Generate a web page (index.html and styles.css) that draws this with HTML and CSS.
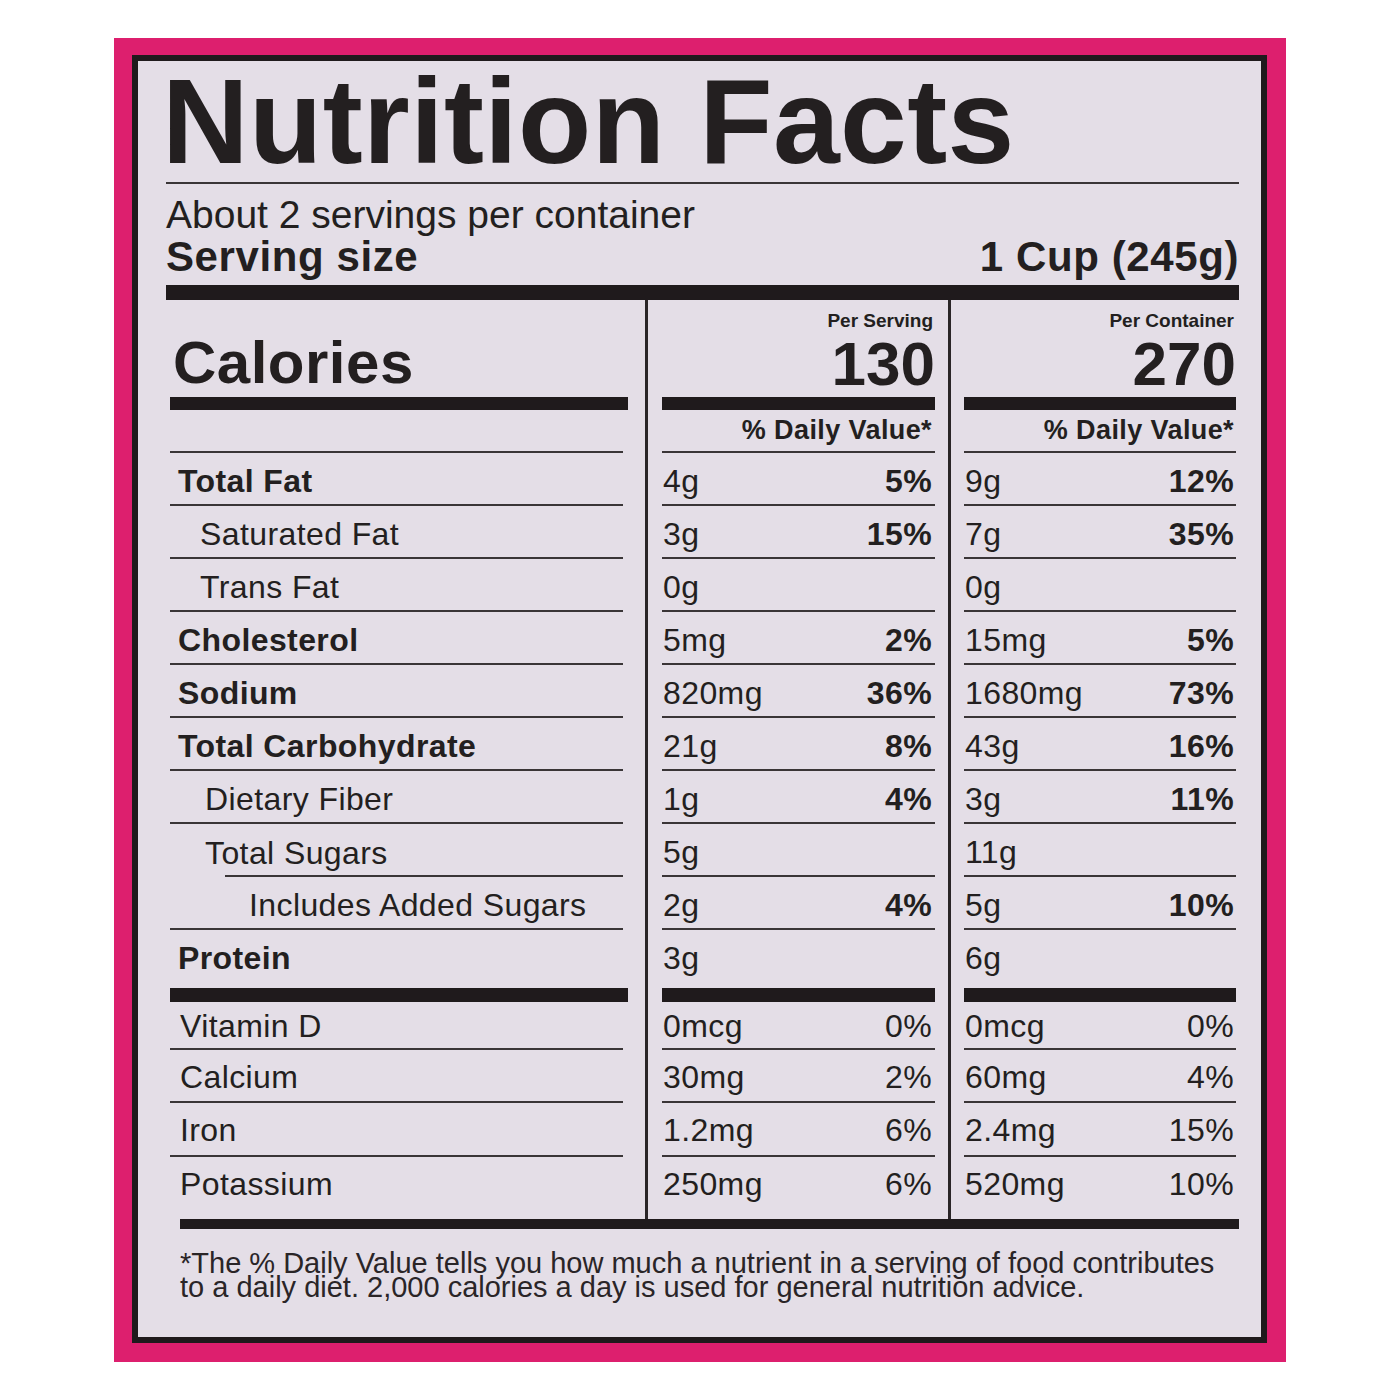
FILE: index.html
```html
<!DOCTYPE html>
<html lang="en">
<head>
<meta charset="UTF-8">
<meta name="viewport" content="width=device-width, initial-scale=1.0">
<title>Nutrition Facts</title>
<link rel="stylesheet" href="styles.css">
</head>
<body>
<div class="frame">
    <div class="label">
        <h1 class="title">Nutrition Facts</h1>
        <p class="servings">About 2 servings per container</p>
        <div class="serving-size">
            <span>Serving size</span>
            <span>1 Cup (245g)</span>
        </div>

        <div class="facts">
            <!-- nombres -->
            <div class="col col-names">
                <div class="head"><span class="calories">Calories</span></div>
                <div class="bar"></div>
                <div class="row dv"></div>
                <div class="row bold">Total Fat</div>
                <div class="row lvl1">Saturated Fat</div>
                <div class="row lvl1">Trans Fat</div>
                <div class="row bold">Cholesterol</div>
                <div class="row bold">Sodium</div>
                <div class="row bold">Total Carbohydrate</div>
                <div class="row lvl2">Dietary Fiber</div>
                <div class="row lvl2 sugars">Total Sugars</div>
                <div class="row lvl3">Includes Added Sugars</div>
                <div class="row bold protein">Protein</div>
                <div class="bar bar-low"></div>
                <div class="row vit vit-d">Vitamin D</div>
                <div class="row vit">Calcium</div>
                <div class="row vit iron">Iron</div>
                <div class="row vit last">Potassium</div>
            </div>

            <!-- por porción -->
            <div class="col col-values">
                <div class="head">
                    <span class="per">Per Serving</span>
                    <span class="cal-num">130</span>
                </div>
                <div class="bar"></div>
                <div class="row dv">% Daily Value*</div>
                <div class="row"><span>4g</span><b>5%</b></div>
                <div class="row"><span>3g</span><b>15%</b></div>
                <div class="row"><span>0g</span></div>
                <div class="row"><span>5mg</span><b>2%</b></div>
                <div class="row"><span>820mg</span><b>36%</b></div>
                <div class="row"><span>21g</span><b>8%</b></div>
                <div class="row"><span>1g</span><b>4%</b></div>
                <div class="row"><span>5g</span></div>
                <div class="row"><span>2g</span><b>4%</b></div>
                <div class="row protein"><span>3g</span></div>
                <div class="bar bar-low"></div>
                <div class="row vit vit-d"><span>0mcg</span><span>0%</span></div>
                <div class="row vit"><span>30mg</span><span>2%</span></div>
                <div class="row vit iron"><span>1.2mg</span><span>6%</span></div>
                <div class="row vit last"><span>250mg</span><span>6%</span></div>
            </div>

            <!-- por envase -->
            <div class="col col-values col-last">
                <div class="head">
                    <span class="per">Per Container</span>
                    <span class="cal-num">270</span>
                </div>
                <div class="bar"></div>
                <div class="row dv">% Daily Value*</div>
                <div class="row"><span>9g</span><b>12%</b></div>
                <div class="row"><span>7g</span><b>35%</b></div>
                <div class="row"><span>0g</span></div>
                <div class="row"><span>15mg</span><b>5%</b></div>
                <div class="row"><span>1680mg</span><b>73%</b></div>
                <div class="row"><span>43g</span><b>16%</b></div>
                <div class="row"><span>3g</span><b>11%</b></div>
                <div class="row"><span>11g</span></div>
                <div class="row"><span>5g</span><b>10%</b></div>
                <div class="row protein"><span>6g</span></div>
                <div class="bar bar-low"></div>
                <div class="row vit vit-d"><span>0mcg</span><span>0%</span></div>
                <div class="row vit"><span>60mg</span><span>4%</span></div>
                <div class="row vit iron"><span>2.4mg</span><span>15%</span></div>
                <div class="row vit last"><span>520mg</span><span>10%</span></div>
            </div>
        </div>

        <div class="bottom-bar"></div>
        <p class="footnote">*The % Daily Value tells you how much a nutrient in a serving of food contributes<br>to a daily diet. 2,000 calories a day is used for general nutrition advice.</p>
    </div>
</div>
</body>
</html>
```

FILE: styles.css
```css
body {
    margin: 0;
    background-color: #fff;
    font-family: "Liberation Sans", Arial, sans-serif;
    color: #231f20;
}
.frame {
    box-sizing: border-box;
    width: 1172px;
    height: 1324px;
    margin: 38px 0 0 114px;
    padding: 17px 19px 19px 18px;
    background-color: #dd1f6e;
}
.label {
    box-sizing: border-box;
    height: 100%;
    border: 6px solid #1f1a1c;
    background-color: #e4dee7;
    padding: 0 22px 0 28px;
}
.title {
    margin: 0;
    text-indent: -4px;
    font-size: 120px;
    line-height: 121px;
    font-weight: bold;
    letter-spacing: 0.4px;
    border-bottom: 2px solid #3a3537;
}
.servings {
    margin: 11px 0 0;
    font-size: 39px;
    line-height: 40px;
}
.serving-size {
    display: flex;
    justify-content: space-between;
    font-size: 42px;
    line-height: 44px;
    font-weight: bold;
    letter-spacing: 0.6px;
    padding-bottom: 6px;
    border-bottom: 15px solid #1f1a1c;
}

/* tabla de tres columnas */
.facts {
    display: grid;
    grid-template-columns: 479px 303px 290px;
}
.col {
    display: flex;
    flex-direction: column;
    padding-bottom: 10px;
}
.col-names {
    padding-left: 4px;
    padding-right: 22px;
}
.col-values {
    border-left: 3px solid #2a2527;
    padding-left: 14px;
    padding-right: 13px;
}
.col-last {
    padding-left: 13px;
    padding-right: 2px;
}
.head {
    height: 97px;
    box-sizing: border-box;
    display: flex;
    flex-direction: column;
    justify-content: flex-end;
    align-items: flex-end;
    padding-bottom: 2px;
}
.col-names .head {
    align-items: flex-start;
    padding-bottom: 4px;
}
.calories {
    font-size: 60px;
    line-height: 60px;
    font-weight: bold;
    letter-spacing: 0.5px;
    padding-left: 3px;
}
.per {
    font-size: 19px;
    line-height: 20px;
    font-weight: bold;
    margin-bottom: 2px;
    padding-right: 2px;
}
.cal-num {
    font-size: 62px;
    line-height: 62px;
    font-weight: bold;
}
.bar {
    height: 13px;
    background-color: #1f1a1c;
}
.col-names .bar {
    margin-right: -5px;
}
.bar-low {
    height: 14px;
}
.row {
    box-sizing: border-box;
    height: 53px;
    display: flex;
    align-items: center;
    justify-content: space-between;
    font-size: 32px;
    letter-spacing: 0.4px;
    border-bottom: 2px solid #3a3537;
    padding: 5px 3px 0 1px;
}
.row b {
    font-weight: bold;
}
.row.dv {
    height: 43px;
    justify-content: flex-end;
    font-size: 27px;
    font-weight: bold;
    padding-top: 0;
    padding-bottom: 1px;
}
.col-names .row {
    justify-content: flex-start;
    padding-left: 8px;
}
.col-names .bold {
    font-weight: bold;
}
.col-names .lvl1 {
    padding-left: 30px;
}
.col-names .lvl2 {
    padding-left: 35px;
}
.col-names .lvl3 {
    padding-left: 79px;
}
.col-names .sugars {
    border-bottom: none;
    background: linear-gradient(#3a3537, #3a3537) right bottom / calc(100% - 55px) 2px no-repeat;
}
.row.protein {
    height: 58px;
    border-bottom: none;
    padding-top: 2px;
    padding-bottom: 4px;
}
.row.vit {
    padding-top: 3px;
}
.row.vit-d {
    height: 48px;
}
.row.iron {
    height: 54px;
}
.row.last {
    height: 52px;
    border-bottom: none;
}
.col-names .vit {
    padding-left: 10px;
}
.col-last .row {
    padding-right: 2px;
}
.bottom-bar {
    height: 10px;
    margin-left: 14px;
    background-color: #1f1a1c;
}
.footnote {
    margin: 22px 0 0 14px;
    font-size: 29px;
    line-height: 24px;
    color: #2a2527;
}
```
